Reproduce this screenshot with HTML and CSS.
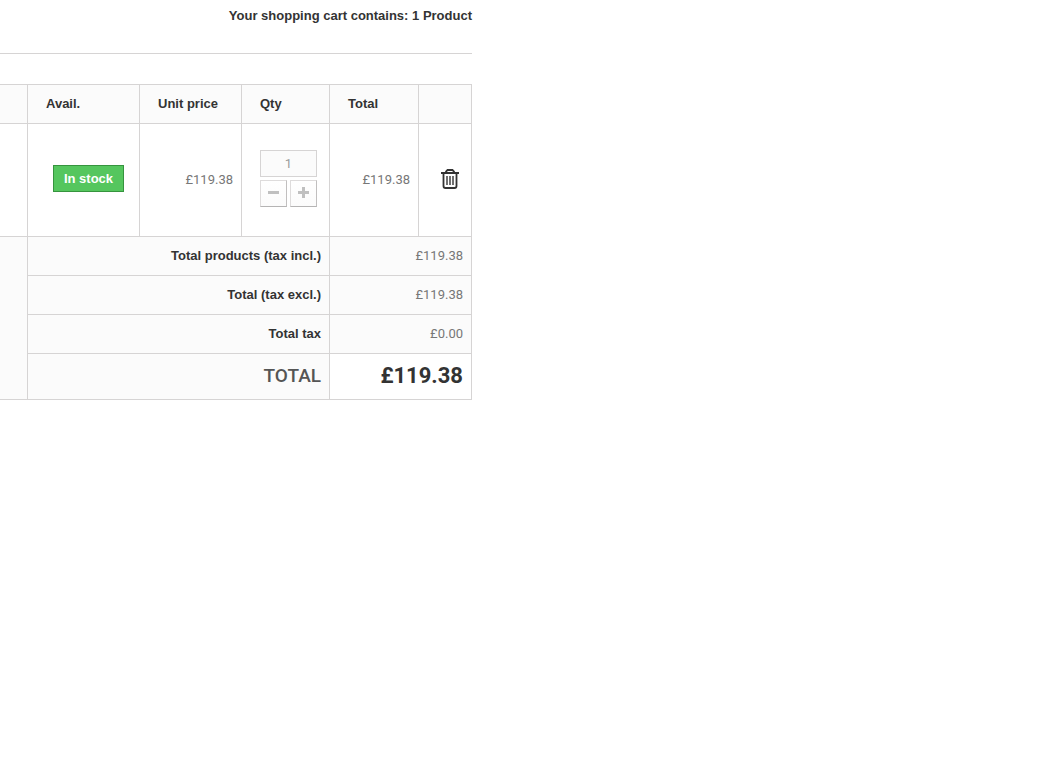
FILE: index.html
```
<!DOCTYPE html>
<html lang="en">
<head>
  <meta charset="UTF-8">
  <meta name="viewport" content="width=device-width, initial-scale=1.0">
  <title>Shopping cart</title>
  <link rel="stylesheet" href="styles.css">
</head>
<body>
  <main class="cart">
    <div class="cart-heading">Your shopping cart contains: 1 Product</div>

    <table class="cart-table">
      <colgroup>
        <col class="col-product">
        <col class="col-avail">
        <col class="col-unit">
        <col class="col-qty">
        <col class="col-total">
        <col class="col-delete">
      </colgroup>
      <thead>
        <tr>
          <th></th>
          <th>Avail.</th>
          <th>Unit price</th>
          <th>Qty</th>
          <th>Total</th>
          <th></th>
        </tr>
      </thead>
      <tbody>
        <tr>
          <td></td>
          <td class="avail"><span class="label">In stock</span></td>
          <td class="price">£119.38</td>
          <td class="qty">
            <input type="text" class="qty-input" value="1" aria-label="Quantity">
            <div class="qty-buttons">
              <button type="button" class="qty-button" aria-label="Subtract">
                <svg width="11" height="11" viewBox="0 0 11 11"><path d="M0 4h11v3H0z"/></svg>
              </button>
              <button type="button" class="qty-button" aria-label="Add">
                <svg width="11" height="11" viewBox="0 0 11 11"><path d="M0 4h4V0h3v4h4v3H7v4H4V7H0z"/></svg>
              </button>
            </div>
          </td>
          <td class="price">£119.38</td>
          <td class="delete">
            <a href="#" class="delete-link" aria-label="Delete">
              <svg width="18" height="20" viewBox="0 0 18 20" fill="none" stroke="#333">
                <path d="M0 4h18M5 4V2.5L6.5 1h5L13 2.5V4" stroke-width="1.8"/>
                <path d="M2.5 4v13q0 2 2 2h9q2 0 2-2V4" stroke-width="1.8"/>
                <path d="M6 7v9M9 7v9M12 7v9" stroke-width="1.4"/>
              </svg>
            </a>
          </td>
        </tr>
      </tbody>
      <tfoot>
        <tr>
          <td rowspan="4"></td>
          <th colspan="3">Total products (tax incl.)</th>
          <td colspan="2" class="price">£119.38</td>
        </tr>
        <tr>
          <th colspan="3">Total (tax excl.)</th>
          <td colspan="2" class="price">£119.38</td>
        </tr>
        <tr>
          <th colspan="3">Total tax</th>
          <td colspan="2" class="price">£0.00</td>
        </tr>
        <tr class="grand-total">
          <th colspan="3">TOTAL</th>
          <td colspan="2" class="price">£119.38</td>
        </tr>
      </tfoot>
    </table>
  </main>
</body>
</html>
```
FILE: styles.css
```
body {
  margin: 0;
  background: #fff;
  color: #777;
  font-family: Roboto, "Liberation Sans", Arial, sans-serif;
  font-size: 13px;
  line-height: 18px;
}

.cart {
  max-width: 472px;
}

.cart-heading {
  padding: 7px 0 28px;
  margin-bottom: 30px;
  border-bottom: 1px solid #d6d4d4;
  color: #333;
  font-family: "Liberation Sans", Arial, sans-serif;
  font-weight: bold;
  text-align: right;
}

.cart-table {
  width: 100%;
  table-layout: fixed;
  border-collapse: separate;
  border-spacing: 0;
  border-top: 1px solid #d6d4d4;
}

.col-product { width: 28px; }
.col-avail { width: 112px; }
.col-unit { width: 102px; }
.col-qty { width: 88px; }
.col-total { width: 89px; }
.col-delete { width: 53px; }

.cart-table th,
.cart-table td {
  padding: 10px 8px;
  border-right: 1px solid #d6d4d4;
  border-bottom: 1px solid #d6d4d4;
  vertical-align: middle;
}

.cart-table th {
  background: #fbfbfb;
  color: #333;
  font-family: "Liberation Sans", Arial, sans-serif;
  font-weight: bold;
}

.cart-table thead th {
  padding-left: 18px;
  text-align: left;
}

.cart-table .price {
  text-align: right;
}

.cart-table .avail {
  padding: 10px 8px 12px 18px;
  text-align: center;
}

.label {
  display: inline-block;
  padding: 4px 10px;
  margin-bottom: 2px;
  border: 1px solid #36943e;
  background: #55c65e;
  color: #fff;
  font-family: "Liberation Sans", Arial, sans-serif;
  font-weight: bold;
  line-height: 17px;
}

.cart-table .qty {
  padding: 26px 12px 29px 18px;
}

.qty-input {
  display: block;
  box-sizing: border-box;
  width: 57px;
  height: 27px;
  margin: 0 0 3px;
  padding: 0;
  border: 1px solid #d6d4d4;
  border-radius: 0;
  background: #fbfbfb;
  color: #9c9b9b;
  font: inherit;
  text-align: center;
}

.qty-buttons {
  display: flex;
  gap: 3px;
}

.qty-button {
  display: flex;
  align-items: center;
  justify-content: center;
  width: 27px;
  height: 27px;
  padding: 0 0 2px;
  border: 1px solid;
  border-color: #dedcdc #c1bfbf #b5b4b4 #dedcdc;
  border-radius: 0;
  background: linear-gradient(#fff, #fbfbfb);
}

.qty-button svg {
  fill: #c0c0c0;
}

.cart-table .delete {
  padding: 12px 8px 10px 18px;
  text-align: center;
}

.delete-link {
  display: inline-block;
}

.delete-link svg {
  display: block;
}

.cart-table tfoot th {
  text-align: right;
}

.cart-table tfoot td {
  background: #fbfbfb;
}

.cart-table .grand-total th {
  padding-bottom: 12px;
  color: #555;
  font-family: Roboto, "Liberation Sans", Arial, sans-serif;
  font-size: 19px;
  font-weight: 500;
}

.cart-table .grand-total td {
  padding: 10px 8px 11px;
  background: #fff;
  color: #333;
  font-size: 22px;
  font-weight: bold;
  line-height: 24px;
}
```
